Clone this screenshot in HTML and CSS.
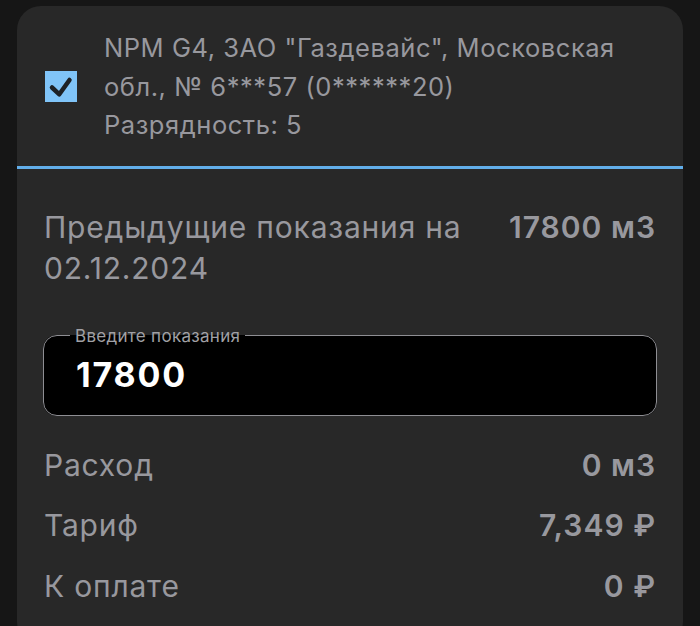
FILE: index.html
```html
<!DOCTYPE html>
<html lang="ru">
<head>
    <meta charset="UTF-8">
    <meta name="viewport" content="width=device-width, initial-scale=1.0">
    <title>Показания счётчика</title>
    <link rel="stylesheet" href="styles.css">
</head>
<body>
    <div class="card">
        <div class="meter-head">
            <span class="check">
                <svg width="32" height="31" viewBox="0 0 32 31">
                    <path d="M7 16.5 L14.3 23.3 L24.5 9" fill="none" stroke="#1d2126" stroke-width="4.5" stroke-linecap="round" stroke-linejoin="round"/>
                </svg>
            </span>
            <div class="meter-name">
                NPM G4, ЗАО "Газдевайс", Московская обл., № 6***57 (0******20)<br>
                Разрядность: 5
            </div>
        </div>

        <div class="meter-body">
            <div class="row prev">
                <span class="label">Предыдущие показания на 02.12.2024</span>
                <span class="value">17800 м3</span>
            </div>

            <fieldset class="field">
                <legend>Введите показания</legend>
                <input type="text" value="17800">
            </fieldset>

            <div class="rows">
                <div class="row">
                    <span class="label">Расход</span>
                    <span class="value">0 м3</span>
                </div>
                <div class="row">
                    <span class="label">Тариф</span>
                    <span class="value">7,349 ₽</span>
                </div>
                <div class="row">
                    <span class="label">К оплате</span>
                    <span class="value">0 ₽</span>
                </div>
            </div>
        </div>
    </div>
</body>
</html>
```

FILE: styles.css
```css
body { margin: 0; background: #161616; font-family: Inter, "Noto Sans", sans-serif; color: #98989e; }
.card { margin: 6px 17px 0; background: #282828; border-radius: 24px; min-height: 640px; }

.meter-head { display: flex; align-items: center; gap: 27px; padding: 23px 27px 21px 28px; border-bottom: 3px solid #62aeea; }
.check { flex: none; width: 32px; height: 31px; background: #80c4f8; display: flex; }
.meter-name { font-size: 25.5px; line-height: 38.5px; letter-spacing: 0.55px; }

.meter-body { padding: 38px 27px 20px 27px; }
.row { display: flex; justify-content: space-between; align-items: flex-start; gap: 40px; font-size: 30px; line-height: 41px; letter-spacing: 0.8px; }
.prev .label { max-width: 440px; }
.value { font-weight: 600; white-space: nowrap; letter-spacing: 1px; }

.field { margin: 37px -1px 0 -1px; padding: 0 33px 0 32px; border: 1.5px solid #8e8e93; border-radius: 14px; background: #000; height: 90px; box-sizing: border-box; }
.field legend { font-size: 17px; line-height: 20px; padding: 0 5px; margin-left: -6px; color: #a0a0a5; letter-spacing: 0.3px; }
.field input { display: block; width: 100%; margin: 9px 0 0; padding: 0; border: none; outline: none; background: transparent; color: #fff; font-family: inherit; font-size: 34px; font-weight: 700; line-height: 40px; letter-spacing: 1.8px; }

.rows { display: flex; flex-direction: column; gap: 19.5px; margin-top: 29px; }
```
